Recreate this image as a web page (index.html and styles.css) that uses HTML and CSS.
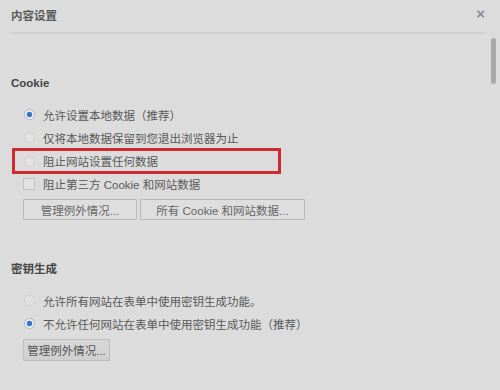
FILE: index.html
```html
<!DOCTYPE html>
<html>
<head>
  <meta charset="utf-8">
  <title>内容设置</title>
  <link rel="stylesheet" href="styles.css">
</head>
<body>
  <div class="dialog">
    <div class="header">
      <h1 class="title">内容设置</h1>
      <span class="close">×</span>
    </div>
    <div class="content">
      <section class="group">
        <h2 class="group-title">Cookie</h2>
        <div class="row"><span class="radio checked"></span>允许设置本地数据（推荐）</div>
        <div class="row"><span class="radio"></span>仅将本地数据保留到您退出浏览器为止</div>
        <div class="row marked"><span class="radio"></span>阻止网站设置任何数据</div>
        <div class="row"><span class="checkbox"></span>阻止第三方 Cookie 和网站数据</div>
        <div class="buttons">
          <button class="btn btn-one">管理例外情况...</button>
          <button class="btn btn-two">所有 Cookie 和网站数据...</button>
        </div>
      </section>
      <section class="group keygen">
        <h2 class="group-title">密钥生成</h2>
        <div class="row"><span class="radio"></span>允许所有网站在表单中使用密钥生成功能。</div>
        <div class="row"><span class="radio checked"></span>不允许任何网站在表单中使用密钥生成功能（推荐）</div>
        <div class="buttons">
          <button class="btn btn-grey">管理例外情况...</button>
        </div>
      </section>
    </div>
    <div class="scrollbar"></div>
  </div>
</body>
</html>
```

FILE: styles.css
```css
body {
  margin: 0;
  background-color: #dcdcdc;
  font-family: "Liberation Sans", "Noto Sans CJK SC", sans-serif;
  font-size: 11.5px;
  color: #585858;
}

.dialog {
  position: relative;
  width: 500px;
  height: 390px;
  overflow: hidden;
}

.header {
  display: flex;
  align-items: center;
  justify-content: space-between;
  height: 32px;
  margin: 0 14px 0 10px;
  border-bottom: 2px solid #d0d0d0;
}

.title {
  margin: 0 0 2px 1px;
  font-size: 11.5px;
  font-weight: bold;
  color: #5a5a5a;
}

.close {
  font-size: 15px;
  font-weight: bold;
  color: #8a8a94;
  margin: 0 1px 6px 0;
}

.content {
  padding: 41px 0 0 11px;
}

.group-title {
  margin: 0 0 12px 0;
  height: 16px;
  line-height: 16px;
  font-size: 11.5px;
  font-weight: bold;
  color: #444;
}

.row {
  display: flex;
  align-items: center;
  height: 23px;
  padding-left: 12px;
}

.row.marked {
  width: 255px;
  height: 20px;
  margin: -1px 0 -2px 1px;
  padding-left: 8px;
  border: 3px solid #cf2a30;
}

.radio {
  width: 11px;
  height: 11px;
  margin: 0 8px 0 1px;
  border: 1px solid #cfcfcf;
  border-radius: 50%;
  background-color: #e2e2e2;
  box-sizing: border-box;
}

.radio.checked {
  border-color: #a8b4c8;
  background: radial-gradient(circle, #2f6fc0 0, #3c7bd0 2.5px, #f2f2f2 3.2px);
}

.checkbox {
  width: 12px;
  height: 12px;
  margin: 0 8px 0 0;
  border: 1px solid #c2c2c2;
  background-color: #e2e2e2;
  box-sizing: border-box;
}

.buttons {
  display: flex;
  gap: 3px;
  margin: 4px 0 0 12px;
}

.btn {
  height: 21px;
  padding: 0;
  font-family: inherit;
  font-size: 11.5px;
  color: #666;
  background-color: #dedede;
  border: 1px solid #b8b8b8;
  border-radius: 1px;
}

.btn-one {
  width: 114px;
}

.btn-two {
  width: 165px;
}

.btn-grey {
  width: 87px;
  height: 22px;
  color: #555;
  background: linear-gradient(#d8d8d8, #cfcfcf);
  border-color: #bdbdbd;
}

.keygen {
  margin-top: 41px;
}

.scrollbar {
  position: absolute;
  top: 38px;
  left: 491px;
  width: 5px;
  height: 46px;
  border-radius: 3px;
  background-color: #a9a9a9;
}
```
